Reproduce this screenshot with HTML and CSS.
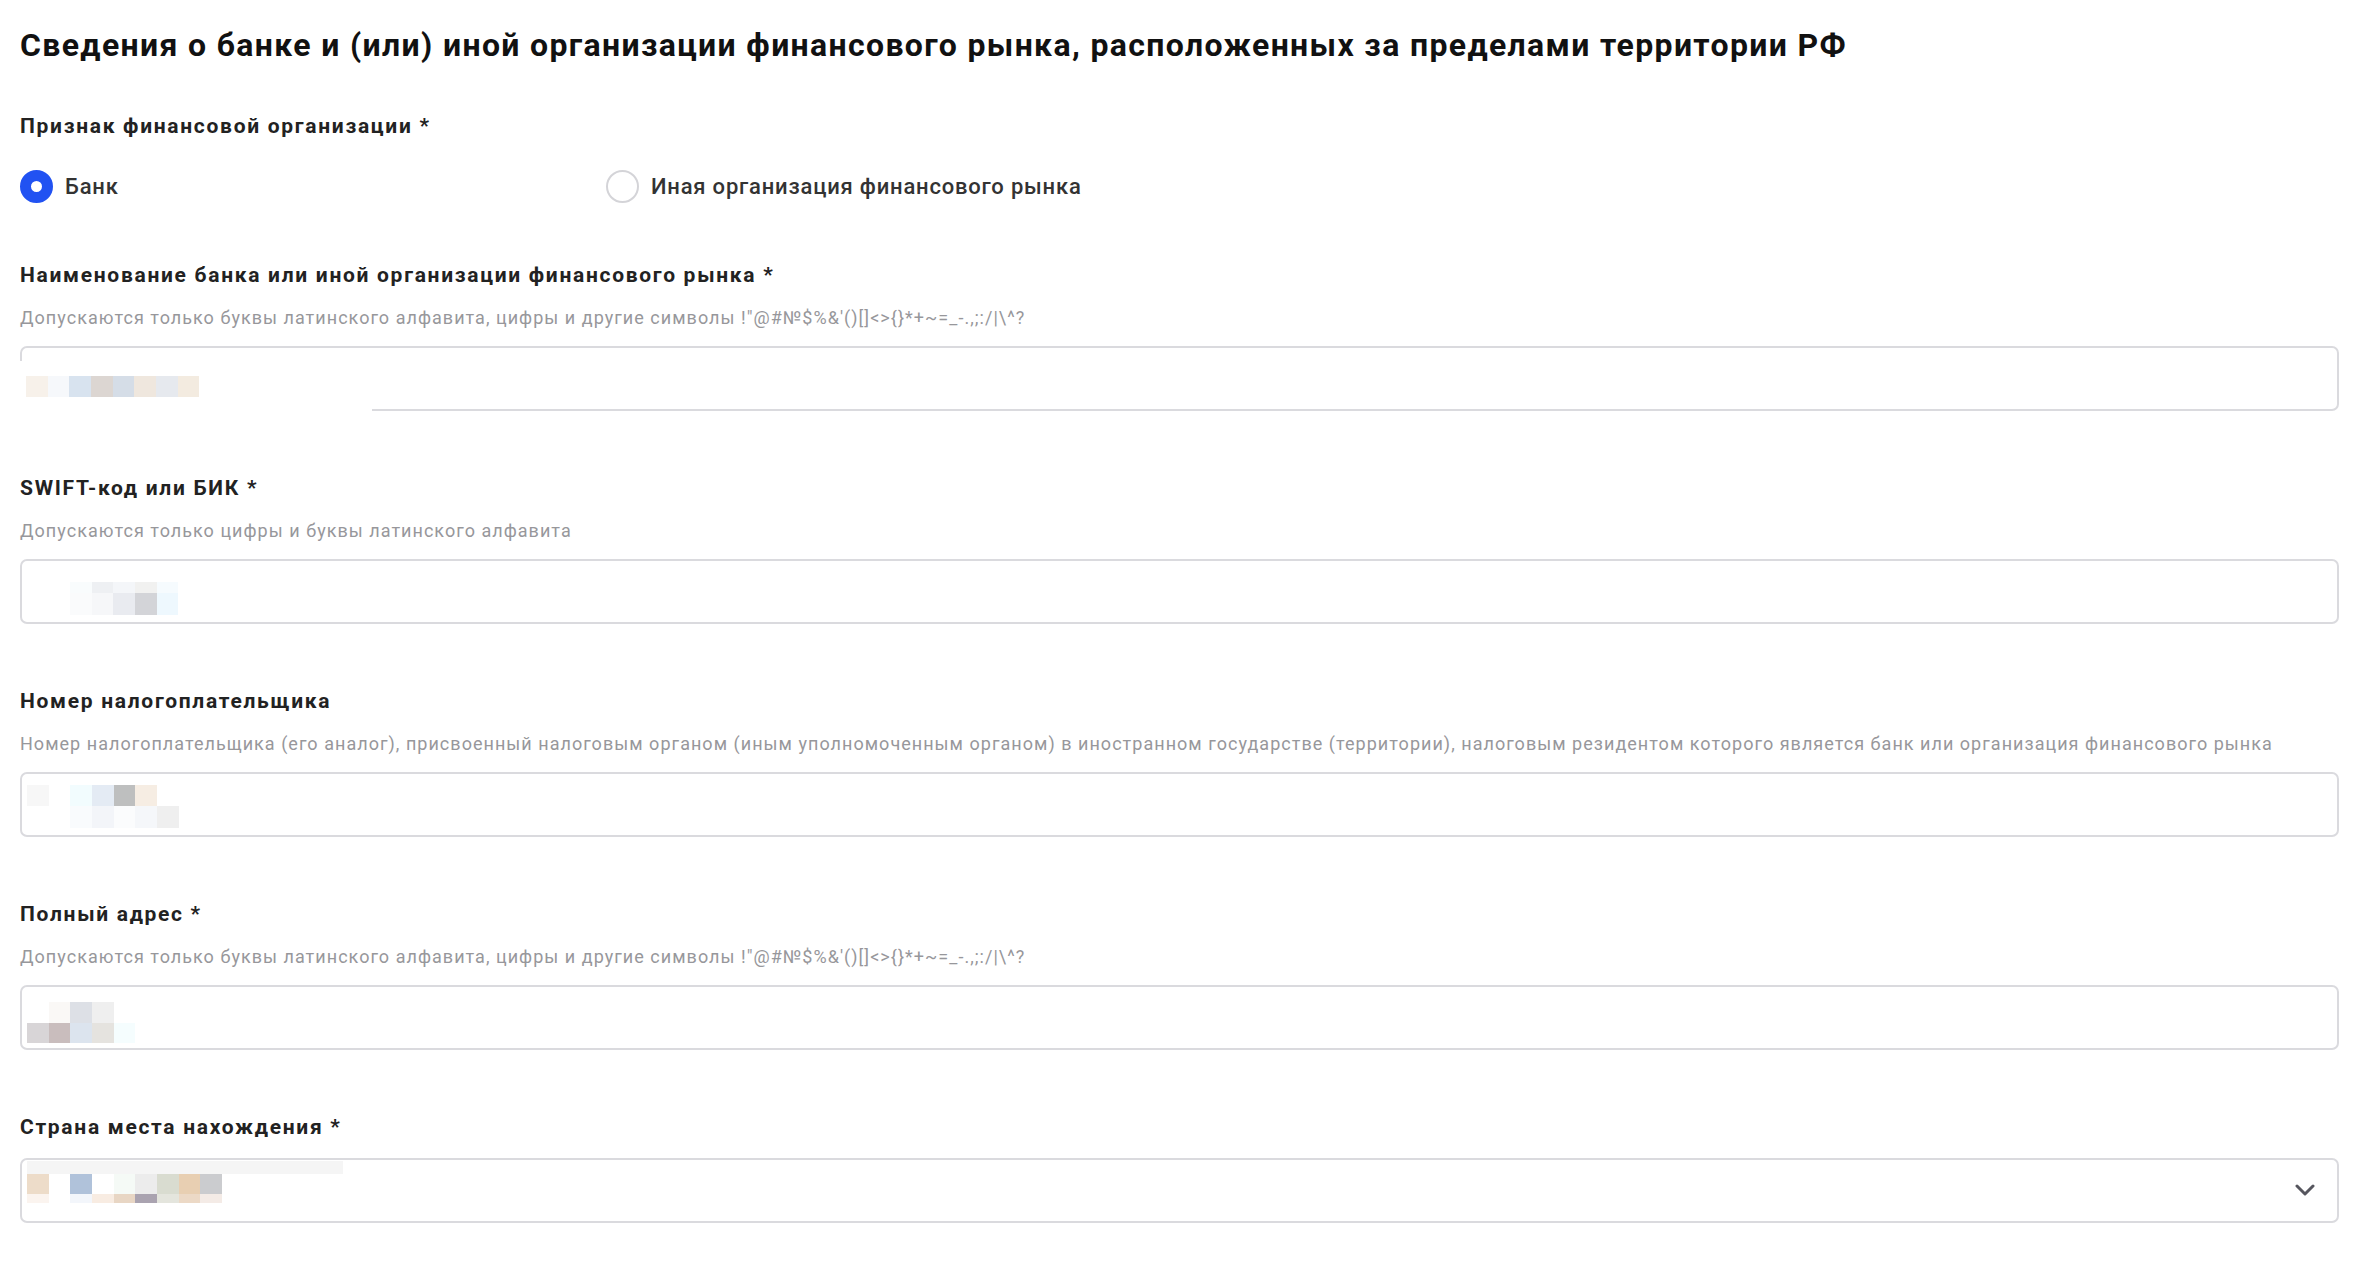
FILE: index.html
```html
<!DOCTYPE html>
<html lang="ru">
<head>
    <meta charset="UTF-8">
    <meta name="viewport" content="width=device-width, initial-scale=1.0">
    <title>Сведения о банке</title>
    <link rel="stylesheet" href="styles.css">
</head>
<body>
    <div class="page">
        <h1 class="title">Сведения о банке и (или) иной организации финансового рынка, расположенных за пределами территории РФ</h1>

        <div class="field field-radio">
            <div class="field-label">Признак финансовой организации *</div>
            <div class="radio-group">
                <label class="radio checked"><span class="radio-mark"></span>Банк</label>
                <label class="radio"><span class="radio-mark"></span>Иная организация финансового рынка</label>
            </div>
        </div>

        <div class="field">
            <div class="field-label">Наименование банка или иной организации финансового рынка *</div>
            <div class="field-hint">Допускаются только буквы латинского алфавита, цифры и другие символы !"@#№$%&amp;'()[]&lt;&gt;{}*+~=_-.,;:/|\^?</div>
            <div class="control">
                <input type="text" class="input" name="bank_name">
                <div class="cover cover-name"></div>
                <div class="mosaic mosaic-name">
                    <i style="background:#f7f1ea"></i><i style="background:#f6f8fb"></i><i style="background:#d8e3ef"></i><i style="background:#dcd6d2"></i><i style="background:#d5dde7"></i><i style="background:#efe7de"></i><i style="background:#e6e9ee"></i><i style="background:#f3ebe0"></i>
                </div>
            </div>
        </div>

        <div class="field">
            <div class="field-label">SWIFT-код или БИК *</div>
            <div class="field-hint">Допускаются только цифры и буквы латинского алфавита</div>
            <div class="control">
                <input type="text" class="input" name="swift">
                <div class="mosaic mosaic-swift">
                    <i style="background:#f9fcfd"></i><i style="background:#eef0f3"></i><i style="background:#f4f6f9"></i><i style="background:#f1f1f0"></i><i style="background:#f6fbfe"></i>
                    <i style="background:#fafbfc"></i><i style="background:#f6f7f9"></i><i style="background:#e9ebf0"></i><i style="background:#d3d4d8"></i><i style="background:#eef8fe"></i>
                </div>
            </div>
        </div>

        <div class="field">
            <div class="field-label">Номер налогоплательщика</div>
            <div class="field-hint">Номер налогоплательщика (его аналог), присвоенный налоговым органом (иным уполномоченным органом) в иностранном государстве (территории), налоговым резидентом которого является банк или организация финансового рынка</div>
            <div class="control">
                <input type="text" class="input" name="tin">
                <div class="mosaic mosaic-tin">
                    <i style="background:#f7f7f7"></i><i></i><i style="background:#f2fcfe"></i><i style="background:#e4ebf4"></i><i style="background:#bebfbf"></i><i style="background:#f6ede3"></i><i></i>
                    <i></i><i></i><i style="background:#f9fbfd"></i><i style="background:#f3f5f9"></i><i style="background:#fbfcfd"></i><i style="background:#f5f7fa"></i><i style="background:#efefef"></i>
                </div>
            </div>
        </div>

        <div class="field">
            <div class="field-label">Полный адрес *</div>
            <div class="field-hint">Допускаются только буквы латинского алфавита, цифры и другие символы !"@#№$%&amp;'()[]&lt;&gt;{}*+~=_-.,;:/|\^?</div>
            <div class="control">
                <input type="text" class="input" name="address">
                <div class="mosaic mosaic-address">
                    <i></i><i style="background:#faf8f6"></i><i style="background:#dde0e6"></i><i style="background:#efefef"></i><i></i><i></i>
                    <i style="background:#d8d5d7"></i><i style="background:#c9bdbd"></i><i style="background:#dce4ee"></i><i style="background:#e5e3df"></i><i style="background:#f5fdfe"></i><i></i>
                </div>
            </div>
        </div>

        <div class="field">
            <div class="field-label no-hint">Страна места нахождения *</div>
            <div class="control">
                <div class="input select-box">
                    <svg class="chevron" width="20" height="12" viewBox="0 0 20 12"><path d="M2 2 L10 10 L18 2" fill="none" stroke="#56565e" stroke-width="3" stroke-linecap="round" stroke-linejoin="round"/></svg>
                </div>
                <div class="mosaic-strip"></div>
                <div class="mosaic mosaic-country">
                    <i style="background:#eddcc9"></i><i></i><i style="background:#b0c2da"></i><i></i><i style="background:#f5faf6"></i><i style="background:#ececec"></i><i style="background:#d9dcd0"></i><i style="background:#e8cfb2"></i><i style="background:#cbcccf"></i>
                    <i style="background:#fbf4ef"></i><i></i><i style="background:#f3f6fb"></i><i style="background:#f8ece2"></i><i style="background:#e8d6c4"></i><i style="background:#aaa3b0"></i><i style="background:#e4e5dd"></i><i style="background:#ecd9c6"></i><i style="background:#f4ebe6"></i>
                </div>
            </div>
        </div>
    </div>
</body>
</html>
```
FILE: styles.css
```css
*{
    margin: 0;
    padding: 0;
    box-sizing: border-box;
}
body{
    font-family: Roboto, "Liberation Sans", sans-serif;
    background: #fff;
    color: #1d1d1f;
}
.page{
    padding: 25px 33px 40px 20px;
}
.title{
    font-size: 32px;
    line-height: 40px;
    font-weight: 700;
    letter-spacing: 1.35px;
    color: #111;
    margin-bottom: 49px;
}

.field + .field{
    margin-top: 65.5px;
}
.field-radio + .field{
    margin-top: 60.5px;
}
.field-label{
    font-size: 21px;
    line-height: 24px;
    font-weight: 700;
    letter-spacing: 1.7px;
    color: #222;
    margin-bottom: 20px;
}
.field-label.no-hint{
    margin-bottom: 18.5px;
}
.field-hint{
    font-size: 18px;
    line-height: 22px;
    letter-spacing: 1.03px;
    color: #97979b;
    margin-bottom: 16.5px;
}

.radio-group{
    display: grid;
    grid-template-columns: 586px auto;
    justify-content: start;
    margin-top: 31.5px;
}
.radio{
    display: flex;
    align-items: center;
    gap: 12px;
    font-size: 22px;
    font-weight: 500;
    letter-spacing: 0.8px;
    color: #333;
    height: 33px;
}
.radio-mark{
    width: 33px;
    height: 33px;
    border-radius: 50%;
    border: 2px solid #d4d4d8;
    background: #fff;
    flex-shrink: 0;
}
.radio.checked .radio-mark{
    border: 11.5px solid #2152f2;
}

.control{
    position: relative;
}
.input{
    display: block;
    width: 100%;
    height: 65px;
    border: 2px solid #dadade;
    border-radius: 7px;
    background: #fff;
    font-family: inherit;
    font-size: 20px;
    outline: none;
}
.select-box{
    display: flex;
    align-items: center;
    justify-content: flex-end;
    padding-right: 22px;
}

/* размытые значения поверх полей */
.cover{
    position: absolute;
    background: #fff;
}
.cover-name{
    left: -3px;
    top: 15px;
    width: 355px;
    height: 53px;
}
.mosaic{
    position: absolute;
    display: grid;
    grid-auto-columns: 21.67px;
}
.mosaic i{
    display: block;
}
.mosaic-name{
    left: 6px;
    top: 30px;
    grid-template-columns: repeat(8, 21.67px);
    grid-template-rows: 21px;
}
.mosaic-swift{
    left: 50px;
    top: 23px;
    grid-template-columns: repeat(5, 21.67px);
    grid-template-rows: 11px 22px;
}
.mosaic-tin{
    left: 7px;
    top: 13px;
    grid-template-columns: repeat(7, 21.67px);
    grid-template-rows: 21px 22px;
}
.mosaic-address{
    left: 7px;
    top: 17px;
    grid-template-columns: repeat(6, 21.67px);
    grid-template-rows: 21px 20px;
}
.mosaic-country{
    left: 7px;
    top: 16px;
    grid-template-columns: repeat(9, 21.67px);
    grid-template-rows: 20px 9px;
}
.mosaic-strip{
    position: absolute;
    left: 7px;
    top: 3px;
    width: 316px;
    height: 13px;
    background: #f5f5f5;
}
```
